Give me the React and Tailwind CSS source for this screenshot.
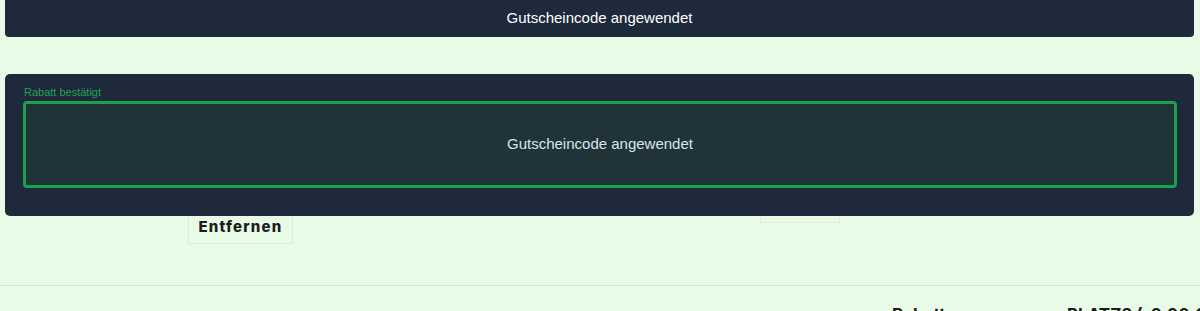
import React from "react";

export default function App() {
  return (
    <div className="relative w-[1200px] h-[311px] overflow-hidden bg-[#e8fbe7]" style={{ fontFamily: '"Liberation Sans", Arial, sans-serif' }}>
      {/* underlying page */}
      <div className="pt-[74px]">
        <div className="h-[126px]" />
        <div className="flex">
          <div className="w-[188px]" />
          <div className="w-[572px]" />
          <div className="w-[80px] h-[23px] border border-[#dfeedd] border-t-0" />
        </div>
        <div className="pl-[188px] -mt-[13px]">
          <div className="w-[105px] h-[34px] border border-[#dceadb] flex items-center justify-center text-[15px] font-extrabold tracking-[1.2px] text-[#1c1c1c]" style={{ fontFamily: 'Inter, "Noto Sans", sans-serif' }}>
            Entfernen
          </div>
        </div>
        <div className="mt-[41px] border-t border-[#d6e8d4]" />
        <div className="flex mt-[19px] text-[17px] font-bold text-[#1c1c1c] leading-[20px]" style={{ fontFamily: 'Inter, "Noto Sans", sans-serif' }}>
          <div className="w-[892px] shrink-0" />
          <div className="w-[175px] shrink-0">Rabatt</div>
          <div className="whitespace-nowrap shrink-0">PLATZ2 (-0,00 €)</div>
        </div>
      </div>

      {/* top toast */}
      <div className="absolute top-0 left-[5px] w-[1189px] h-[37px] rounded-b-[4px] bg-[#1e293b] flex items-center justify-center text-[15px] text-white">
        Gutscheincode angewendet
      </div>

      {/* confirmation panel */}
      <div className="absolute top-[74px] left-[5px] w-[1189px] h-[142px] rounded-[5px] bg-[#1e293b] pt-[12px] pl-[18px] pr-[17px]">
        <div className="text-[11px] leading-[12px] text-[#22a350] pl-[1px]">Rabatt bestätigt</div>
        <div className="mt-[3px] h-[87px] rounded-[4px] border-[3px] border-[#1aa34a] bg-[#1f3338] flex items-center justify-center text-[15px] text-[#dbe3ea]">
          Gutscheincode angewendet
        </div>
      </div>
    </div>
  );
}
